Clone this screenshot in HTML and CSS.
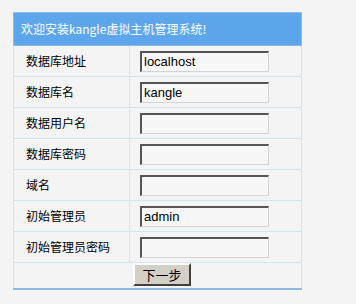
FILE: index.html
```html
<!DOCTYPE html>
<html>
<head>
<meta charset="utf-8">
<link rel="stylesheet" href="styles.css">
</head>
<body>
<div class="page">
  <table class="setup">
    <colgroup><col class="col-label"><col class="col-field"></colgroup>
    <tr><th colspan="2" class="head">欢迎安装kangle虚拟主机管理系统!</th></tr>
    <tr><td class="label">数据库地址</td><td class="field"><input class="inp" type="text" value="localhost"></td></tr>
    <tr><td class="label">数据库名</td><td class="field"><input class="inp" type="text" value="kangle"></td></tr>
    <tr><td class="label">数据用户名</td><td class="field"><input class="inp" type="text" value=""></td></tr>
    <tr><td class="label">数据库密码</td><td class="field"><input class="inp" type="text" value=""></td></tr>
    <tr><td class="label">域名</td><td class="field"><input class="inp" type="text" value=""></td></tr>
    <tr><td class="label">初始管理员</td><td class="field"><input class="inp" type="text" value="admin"></td></tr>
    <tr><td class="label">初始管理员密码</td><td class="field"><input class="inp" type="text" value=""></td></tr>
    <tr><td colspan="2" class="actions"><button class="btn" type="button">下一步</button></td></tr>
  </table>
</div>
</body>
</html>
```
FILE: styles.css
```css
html, body {
  margin: 0;
  padding: 0;
  background: #f4f4f4;
}
.page {
  padding: 12px 0 0 13px;
  font-family: "Noto Sans CJK SC", sans-serif;
  font-size: 12px;
  color: #000;
}
.setup {
  width: 288px;
  border-collapse: collapse;
  border: 1px solid #8fb9de;
  border-bottom-width: 2px;
  table-layout: fixed;
}
.col-label {
  width: 116px;
}
.col-field {
  width: 172px;
}
.head {
  height: 32px;
  padding: 0 0 0 7px;
  background: #5ea6ec;
  color: #fff;
  font-weight: normal;
  text-align: left;
  border: 1px solid #8fb9de;
  line-height: 32px;
}
.setup td {
  border: 1px solid #cfe6f0;
  height: 30px;
  padding: 0;
}
.setup td.label {
  padding-left: 12px;
  line-height: 30px;
}
.setup td.field {
  padding-left: 10px;
}
.inp {
  box-sizing: border-box;
  width: 129px;
  height: 21px;
  margin: 0;
  padding: 0 2px;
  background: #f7f7f7;
  border-style: solid;
  border-color: #555 #d4d4d4 #d4d4d4 #555;
  border-width: 2px 1px 1px 2px;
  font-family: "Liberation Sans", sans-serif;
  font-size: 13px;
  color: #000;
  outline: none;
  display: block;
}
.setup td.actions {
  height: 25px;
  padding: 0 0 0 119px;
  vertical-align: top;
}
.btn {
  display: block;
  box-sizing: border-box;
  width: 58px;
  height: 23px;
  margin: 0;
  padding: 0;
  background: #d4d0c8;
  border: 2px solid;
  border-color: #fff #404040 #404040 #fff;
  font-family: "Noto Sans CJK SC", sans-serif;
  font-size: 13px;
  color: #000;
}
```
